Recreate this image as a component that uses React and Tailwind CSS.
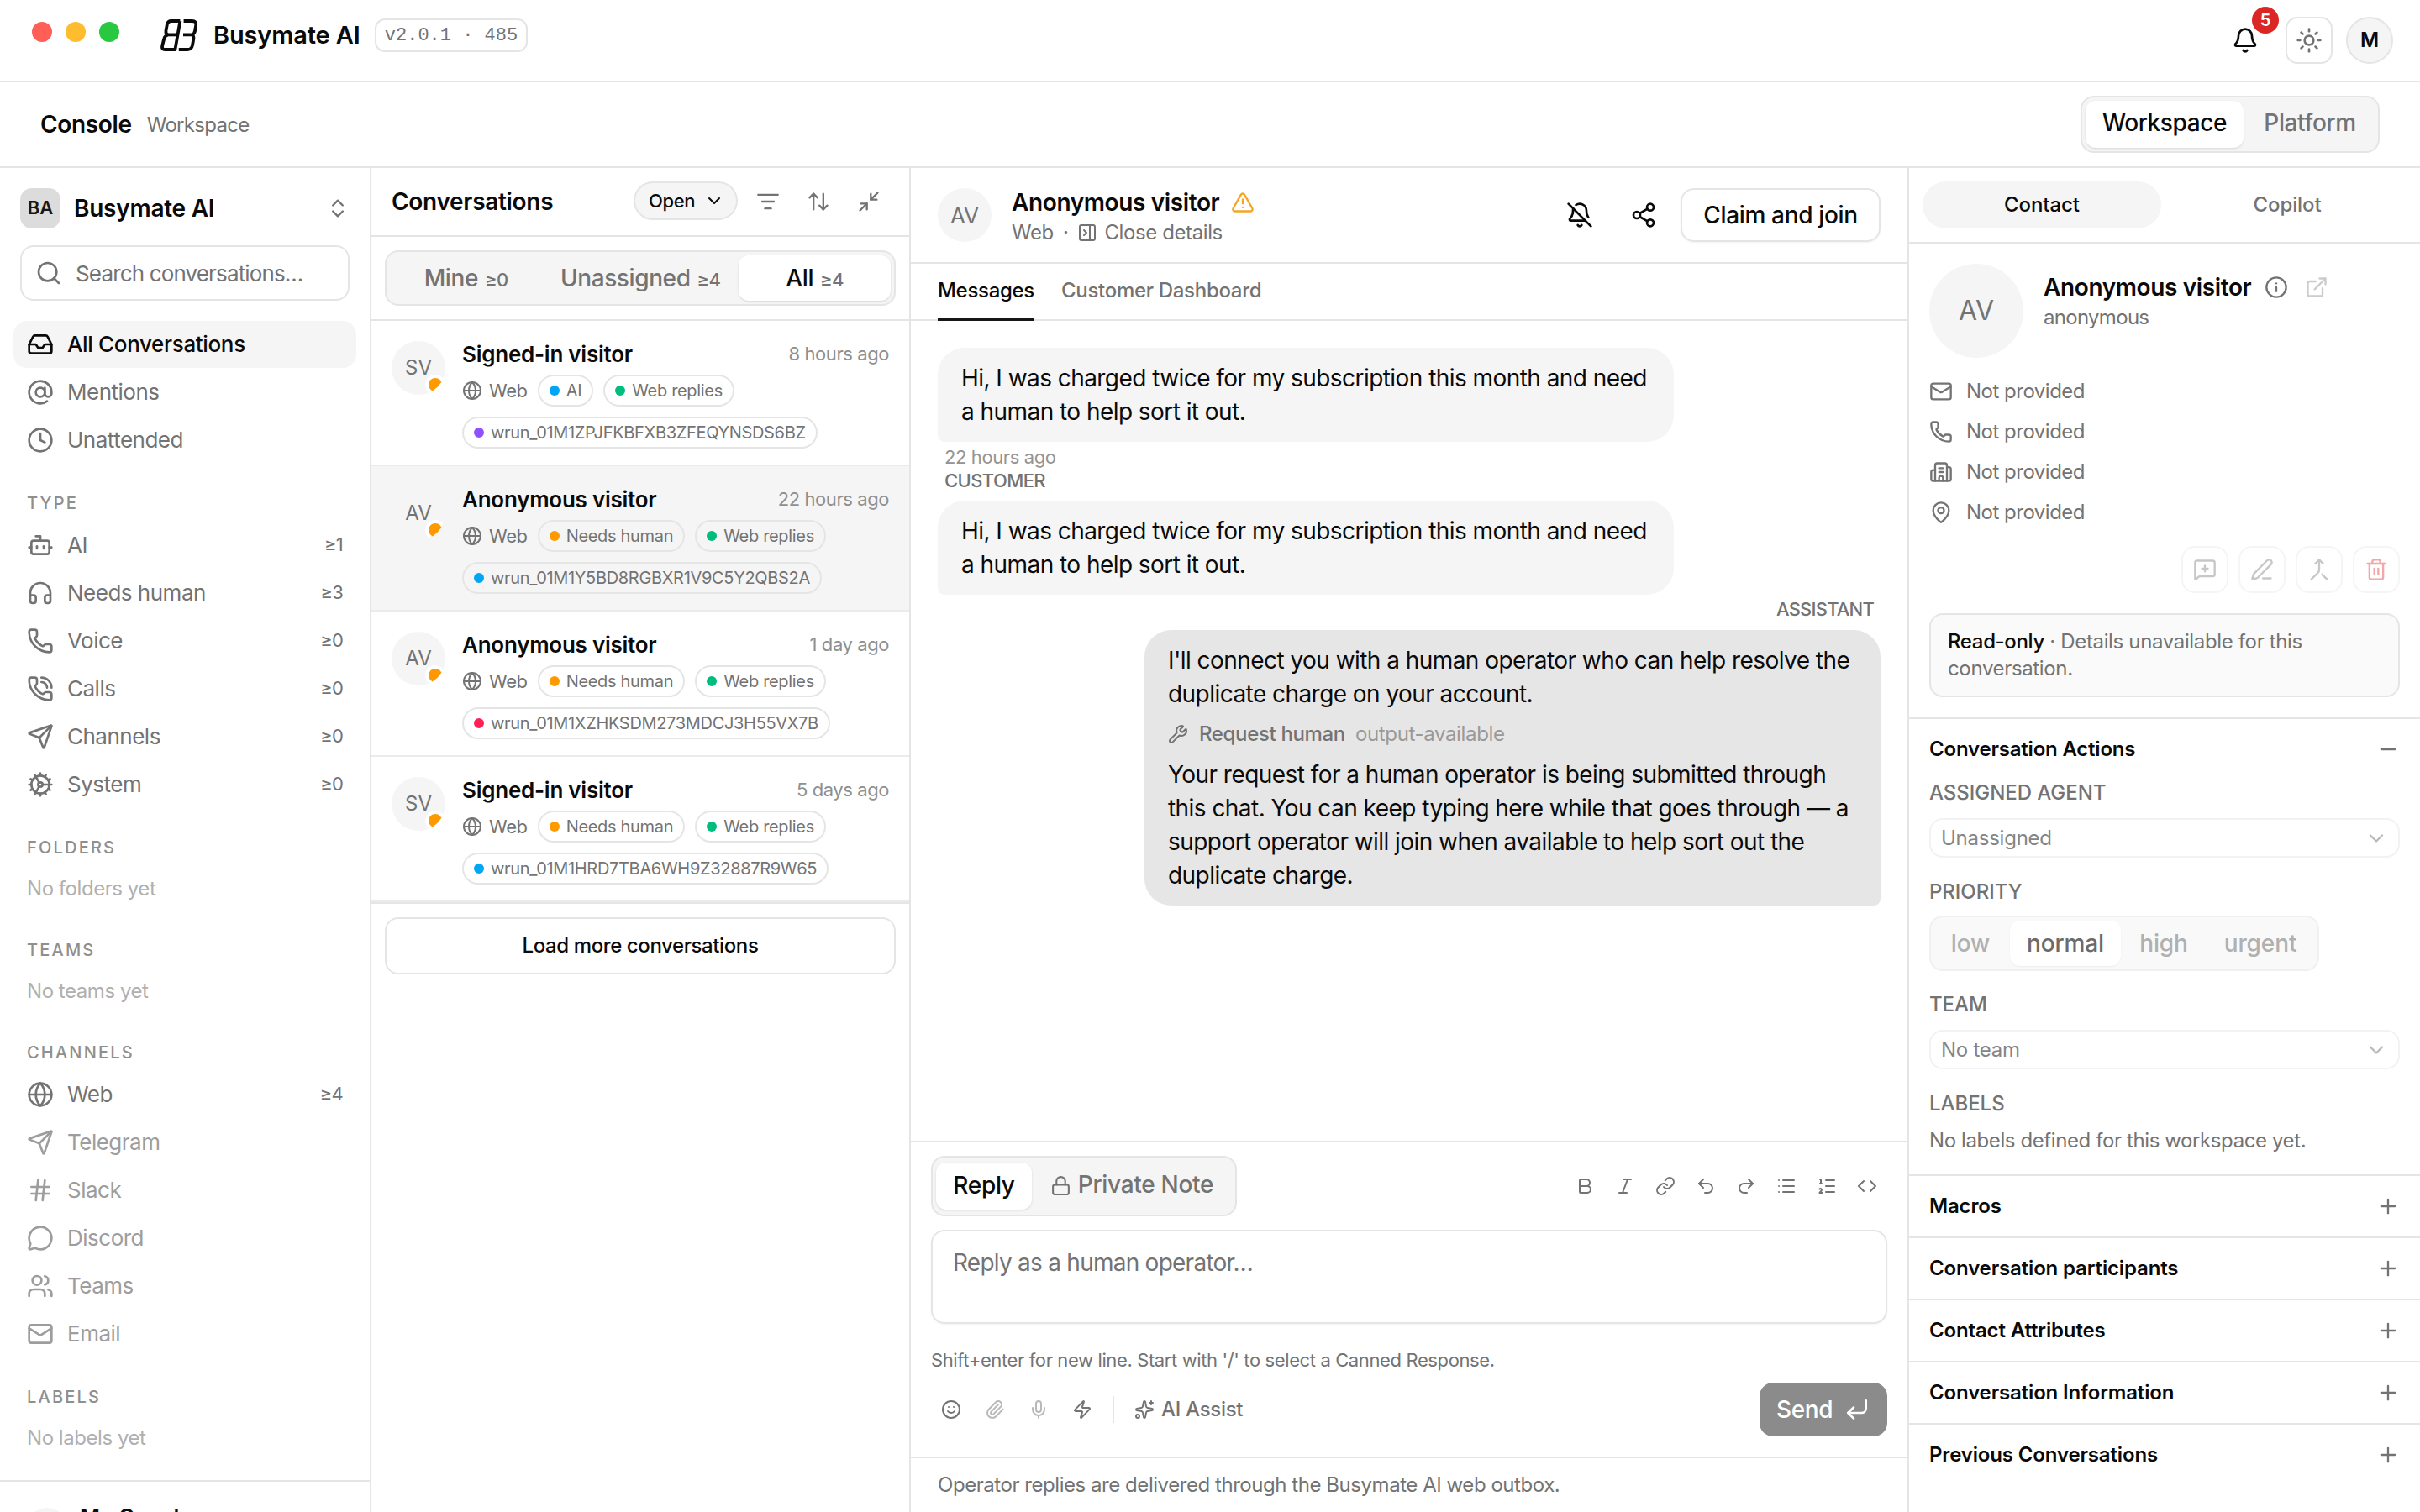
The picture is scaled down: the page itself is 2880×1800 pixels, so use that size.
import {
  ArrowUpDown, AtSign, Bell, BellOff, Bold, Bot, Building2, ChevronDown, ChevronsUpDown, Clock, Code, Cog,
  CornerDownLeft, ExternalLink, Globe, Hash, Headphones, Inbox, Info, Italic, Link, List, ListFilter, ListOrdered,
  Lock, Mail, MapPin, Merge, MessageCircle, MessageSquarePlus, Mic, Minimize2, Minus, PanelRightClose, Paperclip,
  PenLine, Phone, PhoneCall, Plus, Redo2, Search, Send, Share2, Smile, Sparkles, Sun, Trash2, TriangleAlert,
  Undo2, Users, Wrench, Zap
} from "lucide-react";

const primaryNav = [
  { label: "All Conversations", icon: Inbox, active: true },
  { label: "Mentions", icon: AtSign },
  { label: "Unattended", icon: Clock }
];

const typeNav = [
  { label: "AI", icon: Bot, count: "≥1" },
  { label: "Needs human", icon: Headphones, count: "≥3" },
  { label: "Voice", icon: Phone, count: "≥0" },
  { label: "Calls", icon: PhoneCall, count: "≥0" },
  { label: "Channels", icon: Send, count: "≥0" },
  { label: "System", icon: Cog, count: "≥0" }
];

const channelNav = [
  { label: "Web", icon: Globe, count: "≥4" },
  { label: "Telegram", icon: Send, muted: true },
  { label: "Slack", icon: Hash, muted: true },
  { label: "Discord", icon: MessageCircle, muted: true },
  { label: "Teams", icon: Users, muted: true },
  { label: "Email", icon: Mail, muted: true }
];

const conversations = [
  { initials: "SV", name: "Signed-in visitor", time: "8 hours ago", tag: "AI", tagDot: "bg-[#00a6f4]", run: "wrun_01M1ZPJFKBFXB3ZFEQYNSDS6BZ", runDot: "bg-[#8e51ff]" },
  { initials: "AV", name: "Anonymous visitor", time: "22 hours ago", tag: "Needs human", tagDot: "bg-[#fe9a00]", run: "wrun_01M1Y5BD8RGBXR1V9C5Y2QBS2A", runDot: "bg-[#00a6f4]", selected: true },
  { initials: "AV", name: "Anonymous visitor", time: "1 day ago", tag: "Needs human", tagDot: "bg-[#fe9a00]", run: "wrun_01M1XZHKSDM273MDCJ3H55VX7B", runDot: "bg-[#ff2056]" },
  { initials: "SV", name: "Signed-in visitor", time: "5 days ago", tag: "Needs human", tagDot: "bg-[#fe9a00]", run: "wrun_01M1HRD7TBA6WH9Z32887R9W65", runDot: "bg-[#00a6f4]" }
];

const contactRows = [Mail, Phone, Building2, MapPin];
const formatIcons = [Bold, Italic, Link, Undo2, Redo2, List, ListOrdered, Code];
const closedSections = ["Macros", "Conversation participants", "Contact Attributes", "Conversation Information", "Previous Conversations"];

function Logo() {
  return (
    <svg width="46" height="40" viewBox="0 0 46 40" fill="none" stroke="#0a0a0a" strokeWidth="3.8" strokeLinejoin="round">
      <path d="M24.4 3H14Q9.6 3 8.8 7.4L7.5 14.4Q7 18 9.4 19.4Q6 20.8 5.3 24L3.2 32.4Q2.2 37 6.4 37H18.4L24.4 3" />
      <path d="M9.4 19.4H21" />
      <path d="M28.6 3H38.6Q44 3 43.2 8L42 14.8Q41.4 18.4 38.4 19.4Q41 21 40.3 24.6L39 32Q38 37 33.4 37H22.8M28 19.4H38.4" />
    </svg>
  );
}

function TopBar() {
  return (
    <header className="flex h-[98px] shrink-0 border-b-2 border-[#e5e5e5]">
      <div className="flex h-[76px] items-center pl-[38px]">
        <div className="flex gap-4">
          <span className="size-6 rounded-full bg-[#ff5f57]" />
          <span className="size-6 rounded-full bg-[#febc2e]" />
          <span className="size-6 rounded-full bg-[#28c840]" />
        </div>
      </div>
      <div className="flex h-[84px] items-center pl-[48px]">
        <Logo />
        <span className="ml-[18px] w-[192px] text-[29px] font-semibold tracking-[-0.15px]">Busymate AI</span>
        <span className="flex h-10 w-[182px] items-center justify-center whitespace-pre rounded-xl border-2 border-[#e5e5e5] font-['Liberation_Mono',monospace] text-[22px] text-[#737373]">v2.0.1 · 485</span>
      </div>
      <div className="ml-auto flex h-24 items-center gap-4 pr-8">
        <div className="relative flex size-14 items-center justify-center">
          <Bell size={32} />
          <span className="absolute -right-3 -top-3 flex size-8 items-center justify-center rounded-full bg-[#dc2626] text-[20px] font-semibold text-white">5</span>
        </div>
        <div className="ml-1 flex size-14 items-center justify-center rounded-[14px] border-2 border-[#e5e5e5] text-[#737373]">
          <Sun size={32} />
        </div>
        <div className="flex size-14 items-center justify-center rounded-full border-2 border-[#e5e5e5] bg-[#f5f5f5] text-[24px] font-semibold">M</div>
      </div>
    </header>
  );
}

function ConsoleBar() {
  return (
    <div className="flex h-[102px] shrink-0 items-center border-b-2 border-[#e5e5e5] pl-12 pr-12">
      <span className="text-[28px] font-semibold tracking-[-0.35px]">Console</span>
      <span className="ml-[18px] pt-[2px] text-[24px] tracking-[-0.7px] text-[#737373]">Workspace</span>
      <div className="ml-auto flex h-[68px] w-[356px] rounded-2xl border-2 border-[#e5e5e5] bg-[#f5f5f5] p-1 text-[28px] font-medium tracking-[-0.4px]">
        <div className="flex h-14 w-[188px] items-center justify-center rounded-xl bg-white pb-1 shadow-sm">Workspace</div>
        <div className="flex h-14 flex-1 items-center justify-center pb-1 pl-[2px] text-[#737373]">Platform</div>
      </div>
    </div>
  );
}

function NavItem({ label, icon: Icon, count, active, muted }) {
  const tone = active
    ? "bg-[#f5f5f5] text-[#0a0a0a] font-medium tracking-[-0.35px]"
    : muted
      ? "text-[#9d9d9d] tracking-[-0.5px]"
      : "text-[#737373] tracking-[-0.5px]";
  return (
    <div className={`flex h-14 items-center rounded-2xl pl-4 pr-4 text-[26px] ${tone}`}>
      <Icon size={32} />
      <span className="ml-4 pb-[2px]">{label}</span>
      {count ? <span className="ml-auto pb-[2px] text-[22px] tracking-[-0.8px]">{count}</span> : null}
    </div>
  );
}

function NavHeading({ children }) {
  return <div className="mb-[7px] mt-8 flex h-[30px] items-center pl-4 text-[20px] font-medium uppercase tracking-[2.2px] text-[#8f8f8f]">{children}</div>;
}

function NavEmpty({ children }) {
  return <div className="flex h-[53px] items-center pl-4 text-[24px] tracking-[-0.45px] text-[#b0b0b0]">{children}</div>;
}

function Sidebar() {
  return (
    <aside className="flex w-[442px] shrink-0 flex-col border-r-2 border-[#e5e5e5]">
      <div className="ml-6 mr-6 mt-6 flex h-12 items-center">
        <div className="flex size-12 items-center justify-center rounded-[14px] bg-[#dcdcdc] pb-[2px] text-[22px] font-semibold text-[#171717]">BA</div>
        <span className="ml-4 text-[28px] font-semibold tracking-[-0.25px]">Busymate AI</span>
        <ChevronsUpDown size={28} className="ml-auto text-[#737373]" />
      </div>
      <div className="mx-6 mt-5 flex h-[66px] items-center rounded-2xl border-2 border-[#e5e5e5] pl-4 text-[#737373]">
        <Search size={32} />
        <span className="ml-4 text-[26px] tracking-[-0.85px]">Search conversations…</span>
      </div>
      <nav className="mx-4 mt-6 flex flex-col">
        <div className="flex flex-col gap-px">{primaryNav.map((item) => <NavItem key={item.label} {...item} />)}</div>
        <NavHeading>Type</NavHeading>
        <div className="flex flex-col gap-px">{typeNav.map((item) => <NavItem key={item.label} {...item} />)}</div>
        <NavHeading>Folders</NavHeading>
        <NavEmpty>No folders yet</NavEmpty>
        <NavHeading>Teams</NavHeading>
        <NavEmpty>No teams yet</NavEmpty>
        <NavHeading>Channels</NavHeading>
        <div className="flex flex-col gap-px">{channelNav.map((item) => <NavItem key={item.label} {...item} />)}</div>
        <NavHeading>Labels</NavHeading>
        <NavEmpty>No labels yet</NavEmpty>
      </nav>
      <div className="mt-auto flex h-[38px] shrink-0 items-start overflow-hidden border-t-2 border-[#e5e5e5] pl-8">
        <div className="mt-[31px] size-12 shrink-0 rounded-full bg-[#f5f5f5]" />
        <span className="ml-[15px] mt-[26px] text-[26px] font-semibold leading-8">My Guest</span>
      </div>
    </aside>
  );
}

function Pill({ dot, children }) {
  return (
    <span className="flex h-[38px] items-center rounded-full border-2 border-[#e5e5e5] px-3 text-[20px] tracking-[-0.32px]">
      <span className={`mr-2 size-3 rounded-full ${dot}`} />
      {children}
    </span>
  );
}

function ConversationRow({ initials, name, time, tag, tagDot, run, runDot, selected }) {
  return (
    <div className={`flex h-[173px] border-b-2 border-[#ebebeb] px-6 ${selected ? "bg-[#f5f5f5]" : ""}`}>
      <div className="relative mt-6 flex size-16 shrink-0 items-center justify-center overflow-hidden rounded-full bg-[#f5f5f5] text-[24px] text-[#737373]">
        {initials}
        <span className="absolute bottom-0 right-0 size-6 rounded-full border-4 border-white bg-[#fe9a00]" />
      </div>
      <div className="ml-5 flex flex-1 flex-col pt-[23px] text-[#737373]">
        <div className="flex h-8 items-center justify-between">
          <span className="text-[26px] font-semibold tracking-[-0.25px] text-[#0a0a0a]">{name}</span>
          <span className="text-[22px] tracking-[-0.42px] text-[#8f8f8f]">{time}</span>
        </div>
        <div className="mt-[9px] flex h-[38px] items-center">
          <Globe size={24} />
          <span className="ml-2 mr-3 text-[22px] tracking-[-0.4px]">Web</span>
          <Pill dot={tagDot}>{tag}</Pill>
          <span className="w-3" />
          <Pill dot="bg-[#00bc7d]">Web replies</Pill>
        </div>
        <div className="mt-3 flex">
          <Pill dot={runDot}>{run}</Pill>
        </div>
      </div>
    </div>
  );
}

function ConversationList() {
  return (
    <section className="flex w-[642px] shrink-0 flex-col border-r-2 border-[#e5e5e5]">
      <div className="flex h-[82px] items-center border-b-2 border-[#e5e5e5] pl-6 text-[#737373]">
        <span className="text-[28px] font-semibold tracking-[-0.3px] text-[#0a0a0a]">Conversations</span>
        <div className="mb-[2px] ml-auto flex h-[46px] w-[124px] items-center rounded-full border-2 border-[#e5e5e5] bg-[#f5f5f5] pl-4 text-[22px] font-medium tracking-[-0.4px] text-[#0a0a0a]">
          <span className="w-[66px]">Open</span>
          <ChevronDown size={24} />
        </div>
        <div className="ml-[22px] mr-[34px] flex gap-8">
          <ListFilter size={28} />
          <ArrowUpDown size={28} />
          <Minimize2 size={28} />
        </div>
      </div>
      <div className="border-b-2 border-[#e5e5e5] p-4">
        <div className="flex h-[66px] rounded-2xl border-2 border-[#e5e5e5] bg-[#f5f5f5] p-1 text-[28px] font-medium tracking-[-0.4px] text-[#737373]">
          <div className="flex w-[181px] items-center justify-center gap-2">Mine <span className="pt-1 text-[22px] tracking-[-0.8px]">≥0</span></div>
          <div className="flex flex-1 items-center justify-center gap-2">Unassigned <span className="pt-1 text-[22px] tracking-[-0.8px]">≥4</span></div>
          <div className="flex w-[181px] items-center justify-center gap-2 rounded-xl bg-white text-[#0a0a0a] shadow-sm">All <span className="pt-1 text-[22px] tracking-[-0.8px] text-[#737373]">≥4</span></div>
        </div>
      </div>
      {conversations.map((item) => <ConversationRow key={item.run} {...item} />)}
      <div className="border-t-2 border-[#e5e5e5] p-4">
        <div className="flex h-[68px] items-center justify-center rounded-2xl border-2 border-[#e5e5e5] text-[24px] font-medium tracking-[-0.4px]">Load more conversations</div>
      </div>
    </section>
  );
}

function CustomerBubble() {
  return (
    <div className="w-[876px] rounded-[32px] rounded-bl-lg bg-[#f5f5f5] px-7 py-4 text-[28px] leading-10 tracking-[-0.55px]">
      Hi, I was charged twice for my subscription this month and need<br />a human to help sort it out.
    </div>
  );
}

function Thread() {
  return (
    <div className="flex flex-1 flex-col px-8 pt-8">
      <CustomerBubble />
      <div className="mt-1 flex h-[28px] items-center pl-2 text-[22px] tracking-[-0.4px] text-[#949494]">22 hours ago</div>
      <div className="flex h-[28px] items-center pl-2 text-[22px] font-medium tracking-[-0.6px] text-[#737373]">CUSTOMER</div>
      <div className="mt-[10px]"><CustomerBubble /></div>
      <div className="mt-[3px] flex h-[28px] items-center justify-end pr-2 text-[22px] font-medium tracking-[-0.8px] text-[#737373]">ASSISTANT</div>
      <div className="ml-auto mt-[11px] w-[876px] rounded-[32px] rounded-br-lg bg-[#e6e6e6] px-7 py-4 text-[28px] leading-10 tracking-[-0.55px]">
        <p>I'll connect you with a human operator who can help resolve the<br />duplicate charge on your account.</p>
        <div className="flex h-14 items-center text-[24px] tracking-[-0.35px] text-[#737373]">
          <Wrench size={24} />
          <span className="ml-[13px] font-medium">Request human</span>
          <span className="ml-3 text-[#999999]">output-available</span>
        </div>
        <p>Your request for a human operator is being submitted through<br />this chat. You can keep typing here while that goes through — a<br />support operator will join when available to help sort out the<br />duplicate charge.</p>
      </div>
    </div>
  );
}

function Composer() {
  return (
    <div className="flex h-[376px] shrink-0 flex-col border-t-2 border-[#e5e5e5] px-6 pt-4">
      <div className="flex items-center justify-between">
        <div className="flex h-[72px] w-[364px] items-center rounded-2xl border-2 border-[#e5e5e5] bg-[#f5f5f5] px-1 text-[28px] font-medium tracking-[-0.3px]">
          <div className="flex h-14 w-[114px] items-center justify-center rounded-xl bg-white pb-[2px] shadow-sm">Reply</div>
          <div className="flex flex-1 items-center justify-center pb-[5px] text-[#737373]">
            <Lock size={25} className="mr-2 mt-[3px]" />
            Private Note
          </div>
        </div>
        <div className="mr-3 flex gap-6 text-[#737373]">
          {formatIcons.map((Icon, idx) => <Icon key={idx} size={24} />)}
        </div>
      </div>
      <div className="mt-4 h-[112px] rounded-2xl border-2 border-[#e5e5e5] px-6 pt-[17px] text-[28px] leading-10 tracking-[-0.75px] text-[#737373] shadow-xs">Reply as a human operator…</div>
      <div className="mt-7 flex h-[30px] items-center text-[22px] tracking-[-0.38px] text-[#737373]">Shift+enter for new line. Start with '/' to select a Canned Response.</div>
      <div className="mt-3 flex h-16 items-center pl-3 text-[#737373]">
        <div className="flex gap-7">
          <Smile size={24} />
          <Paperclip size={24} className="text-[#b9b9b9]" />
          <Mic size={24} className="text-[#b9b9b9]" />
          <Zap size={24} />
        </div>
        <span className="ml-6 h-8 w-[2px] bg-[#e5e5e5]" />
        <Sparkles size={24} className="ml-6" />
        <span className="ml-2 text-[24px] font-medium tracking-[-0.3px]">AI Assist</span>
        <div className="ml-auto flex h-16 w-[152px] items-center justify-center rounded-2xl bg-[#8b8b8b] text-[28px] font-medium tracking-[-0.4px] text-white">
          Send
          <CornerDownLeft size={32} className="ml-[13px]" />
        </div>
      </div>
    </div>
  );
}

function ConversationView() {
  return (
    <main className="flex w-[1186px] shrink-0 flex-col">
      <div className="flex h-[114px] shrink-0 items-center border-b-2 border-[#e5e5e5] px-8">
        <div className="flex size-16 items-center justify-center rounded-full bg-[#f5f5f5] text-[26px] text-[#737373]">AV</div>
        <div className="ml-6 mt-[5px]">
          <div className="flex h-9 items-center">
            <span className="text-[28px] font-semibold tracking-[-0.38px]">Anonymous visitor</span>
            <TriangleAlert size={28} className="ml-[14px] text-[#f5a524]" />
          </div>
          <div className="flex h-9 items-center text-[24px] tracking-[-0.4px] text-[#737373]">
            <span>Web</span>
            <span className="mx-[11px]">·</span>
            <PanelRightClose size={24} />
            <span className="ml-2">Close details</span>
          </div>
        </div>
        <div className="ml-auto flex items-center">
          <BellOff size={32} />
          <Share2 size={32} className="ml-11" />
          <div className="ml-7 flex h-16 w-[238px] items-center justify-center rounded-2xl border-2 border-[#e5e5e5] text-[28px] font-medium tracking-[-0.35px] shadow-xs">Claim and join</div>
        </div>
      </div>
      <div className="flex h-[68px] shrink-0 gap-8 border-b-2 border-[#e5e5e5] px-8 text-[24px] font-medium tracking-[-0.3px]">
        <div className="-mb-[2px] flex items-center border-b-4 border-[#171717]">Messages</div>
        <div className="-mb-[2px] flex items-center border-b-4 border-transparent text-[#737373]">Customer Dashboard</div>
      </div>
      <Thread />
      <Composer />
      <div className="flex h-[66px] shrink-0 items-center border-t-2 border-[#e5e5e5] px-8 text-[24px] tracking-[-0.45px] text-[#737373]">Operator replies are delivered through the Busymate AI web outbox.</div>
    </main>
  );
}

function FieldLabel({ children }) {
  return <div className="flex h-8 items-center text-[24px] font-medium tracking-[-0.05px] text-[#737373]">{children}</div>;
}

function SelectField({ children }) {
  return (
    <div className="mt-[14px] flex h-[47px] items-center justify-between rounded-2xl border-2 border-[#f2f2f2] pl-3 pr-3 text-[24px] tracking-[-0.25px] text-[#858585]">
      {children}
      <ChevronDown size={28} className="text-[#b9b9b9]" />
    </div>
  );
}

function ActionButton({ icon: Icon, danger }) {
  return (
    <div className={`flex size-14 items-center justify-center rounded-2xl border-2 border-[#f5f5f5] ${danger ? "text-[#f0a8a8]" : "text-[#c7c7c7]"}`}>
      <Icon size={28} />
    </div>
  );
}

function ContactPanel() {
  return (
    <aside className="flex flex-1 flex-col border-l-2 border-[#e5e5e5]">
      <div className="flex gap-2 border-b-2 border-[#e5e5e5] p-4 text-[24px] font-medium tracking-[-0.1px]">
        <div className="flex h-14 flex-1 items-center justify-center rounded-full bg-[#f5f5f5]">Contact</div>
        <div className="flex h-14 flex-1 items-center justify-center text-[#737373]">Copilot</div>
      </div>
      <div className="border-b-2 border-[#e5e5e5] p-6">
        <div className="flex">
          <div className="flex size-28 items-center justify-center rounded-full bg-[#f5f5f5] text-[32px] text-[#737373]">AV</div>
          <div className="ml-6 pt-2">
            <div className="flex h-10 items-center">
              <span className="text-[28px] font-semibold tracking-[-0.38px]">Anonymous visitor</span>
              <Info size={28} className="ml-4 text-[#737373]" />
              <ExternalLink size={28} className="ml-5 text-[#cccccc]" />
            </div>
            <div className="text-[24px] leading-8 tracking-[-0.7px] text-[#737373]">anonymous</div>
          </div>
        </div>
        <div className="mt-4 text-[24px] tracking-[-0.5px] text-[#737373]">
          {contactRows.map((Icon, idx) => (
            <div key={idx} className="flex h-12 items-center">
              <Icon size={28} />
              <span className="ml-4">Not provided</span>
            </div>
          ))}
        </div>
        <div className="mt-4 flex justify-end gap-3">
          <ActionButton icon={MessageSquarePlus} />
          <ActionButton icon={PenLine} />
          <ActionButton icon={Merge} />
          <ActionButton icon={Trash2} danger />
        </div>
        <div className="mt-6 h-[100px] rounded-2xl border-2 border-[#e5e5e5] bg-[#fafafa] px-5 py-4 text-[24px] leading-8 tracking-[-0.35px] text-[#737373]">
          <span className="font-medium text-[#0a0a0a]">Read-only</span> · Details unavailable for this<br />conversation.
        </div>
      </div>
      <div className="px-6 pb-6">
        <div className="flex h-[72px] items-center justify-between text-[24px] font-semibold tracking-[-0.2px]">
          Conversation Actions
          <Minus size={28} className="text-[#737373]" />
        </div>
        <FieldLabel>ASSIGNED AGENT</FieldLabel>
        <SelectField>Unassigned</SelectField>
        <div className="mt-[25px]"><FieldLabel>PRIORITY</FieldLabel></div>
        <div className="mt-3 flex h-[66px] w-[464px] rounded-2xl border-2 border-[#f0f0f0] bg-[#f9f9f9] p-1 text-[28px] font-medium tracking-[-0.1px] text-[#b0b0b0]">
          <div className="flex w-[90px] items-center justify-center pr-1">low</div>
          <div className="flex w-[132px] items-center justify-center rounded-xl bg-white text-[#6b6b6b] shadow-xs">normal</div>
          <div className="flex w-[102px] items-center justify-center">high</div>
          <div className="flex flex-1 items-center justify-center">urgent</div>
        </div>
        <div className="mt-6"><FieldLabel>TEAM</FieldLabel></div>
        <SelectField>No team</SelectField>
        <div className="mt-[25px]"><FieldLabel>LABELS</FieldLabel></div>
        <div className="mt-3 text-[24px] leading-8 tracking-[-0.4px] text-[#737373]">No labels defined for this workspace yet.</div>
      </div>
      {closedSections.map((title) => (
        <div key={title} className="flex h-[74px] shrink-0 items-center justify-between border-t-2 border-[#e5e5e5] px-6 text-[24px] font-semibold tracking-[-0.15px]">
          {title}
          <Plus size={28} className="text-[#737373]" />
        </div>
      ))}
    </aside>
  );
}

export default function App() {
  return (
    <div className="flex h-[1800px] w-[2880px] flex-col overflow-hidden whitespace-nowrap bg-white font-['Inter',sans-serif] text-[#0a0a0a]">
      <TopBar />
      <ConsoleBar />
      <div className="flex min-h-0 flex-1">
        <Sidebar />
        <ConversationList />
        <ConversationView />
        <ContactPanel />
      </div>
    </div>
  );
}
